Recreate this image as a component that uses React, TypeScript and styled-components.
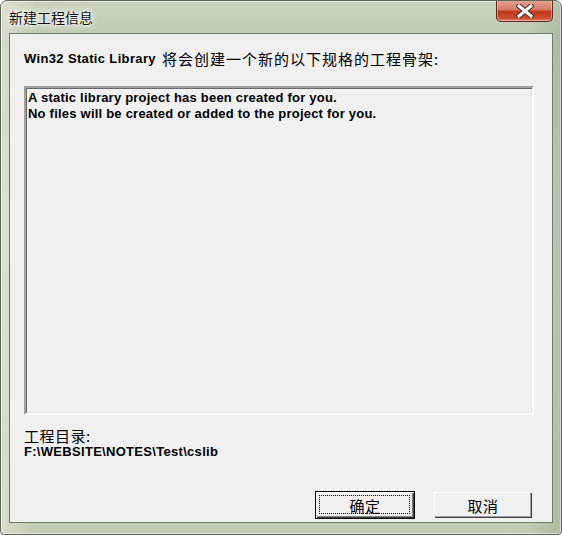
import React from "react";
import styled, { createGlobalStyle } from "styled-components";

const GlobalStyle = createGlobalStyle`
  html, body {
    margin: 0;
    padding: 0;
    background: #ffffff;
  }
  * {
    box-sizing: border-box;
  }
`;

const cjk = `"Noto Sans CJK SC", "Noto Sans", sans-serif`;
const latin = `"Liberation Sans", Arial, "Noto Sans CJK SC", sans-serif`;

const Window = styled.div`
  width: 562px;
  height: 535px;
  display: flex;
  flex-direction: column;
  padding: 0 8px 11px 8px;
  border: 1px solid #5d6659;
  border-radius: 7px 7px 4px 4px;
  background:
    linear-gradient(90deg, rgba(255, 255, 255, 0.35) 0%, rgba(255, 255, 255, 0) 6%, rgba(255, 255, 255, 0) 94%, rgba(120, 135, 110, 0.25) 100%),
    linear-gradient(180deg, #c9d2bd 0%, #bfc9b2 8%, #cbd4bf 40%, #c2ccb4 100%);
  box-shadow: inset 0 0 0 1px rgba(255, 255, 255, 0.5);
  overflow: hidden;
`;

const TitleBar = styled.div`
  height: 32px;
  display: flex;
  align-items: flex-start;
  justify-content: space-between;
`;

const Title = styled.span`
  margin-top: 7px;
  font-family: ${cjk};
  font-size: 14px;
  line-height: 18px;
  color: #111;
  text-shadow: 0 0 6px #fff, 0 0 10px #fff, 0 0 3px #fff;
`;

const CloseButton = styled.div`
  width: 57px;
  height: 22px;
  margin-top: -1px;
  display: flex;
  align-items: center;
  justify-content: center;
  border: 1px solid #5e2b20;
  border-top: none;
  border-radius: 0 0 5px 5px;
  background: linear-gradient(180deg, #e6a696 0%, #d67a66 45%, #c0391f 55%, #c94b2d 85%, #e0836a 100%);
  box-shadow: inset 0 0 0 1px rgba(255, 220, 210, 0.45);
`;

const Client = styled.div`
  flex: 1;
  display: flex;
  flex-direction: column;
  border: 1px solid #6e7a6b;
  background: #f0f0f0;
  padding: 0 19px 0 14px;
`;

const Heading = styled.div`
  margin-top: 14px;
  height: 20px;
  display: flex;
  align-items: center;
  color: #000;
`;

const Bold = styled.span`
  font-family: ${latin};
  font-weight: bold;
  font-size: 13px;
  letter-spacing: 0.35px;
  margin-right: 6px;
`;

const Cjk = styled.span`
  font-family: ${cjk};
  font-size: 15px;
  letter-spacing: 1px;
`;

const TextBox = styled.div`
  margin-top: 18px;
  width: 510px;
  height: 329px;
  border-style: solid;
  border-width: 2px;
  border-color: #a0a0a0 #ffffff #ffffff #a0a0a0;
  box-shadow: inset 1px 1px 0 #696969, inset -1px -1px 0 #e3e3e3;
  background: #f0f0f0;
  padding: 2px 2px;
`;

const BoxLine = styled.div`
  font-family: ${latin};
  font-weight: bold;
  font-size: 13px;
  letter-spacing: 0.22px;
  line-height: 16px;
  color: #000;
`;

const DirLabel = styled.div`
  margin-top: 13px;
  font-family: ${cjk};
  font-size: 15px;
  line-height: 16px;
  letter-spacing: 0.5px;
  color: #000;
`;

const DirPath = styled.div`
  font-family: ${latin};
  font-weight: bold;
  font-size: 13px;
  letter-spacing: 0.3px;
  line-height: 15px;
  color: #000;
`;

const ButtonRow = styled.div`
  margin-top: auto;
  margin-bottom: 3px;
  display: flex;
  justify-content: flex-end;
  gap: 18px;
`;

const Button = styled.div<{ $default?: boolean }>`
  width: 100px;
  height: 28px;
  display: flex;
  align-items: center;
  justify-content: center;
  position: relative;
  font-family: ${cjk};
  font-size: 15px;
  letter-spacing: 0.5px;
  color: #000;
  background: #f0f0f0;
  border: 1px solid ${(p) => (p.$default ? "#000" : "#f0f0f0")};
  box-shadow: ${(p) =>
    p.$default
      ? "inset 1px 1px 0 #ffffff, inset -1px -1px 0 #404040, inset -2px -2px 0 #808080"
      : "inset 1px 1px 0 #ffffff, inset -1px -1px 0 #404040, inset -2px -2px 0 #a0a0a0"};
`;

const Focus = styled.span`
  position: absolute;
  inset: 3px 4px 4px 3px;
  border: 1px dotted #000;
`;

const CloseGlyph = () => (
  <svg width="18" height="14" viewBox="0 0 18 14">
    <path
      d="M3 2 L15 12 M15 2 L3 12"
      stroke="#3a2a26"
      strokeWidth="5"
      strokeLinecap="square"
    />
    <path
      d="M3 2 L15 12 M15 2 L3 12"
      stroke="#ffffff"
      strokeWidth="3"
      strokeLinecap="square"
    />
  </svg>
);

export default function App() {
  return (
    <>
      <GlobalStyle />
      <Window>
        <TitleBar>
          <Title>新建工程信息</Title>
          <CloseButton>
            <CloseGlyph />
          </CloseButton>
        </TitleBar>
        <Client>
          <Heading>
            <Bold>Win32 Static Library</Bold>
            <Cjk>将会创建一个新的以下规格的工程骨架:</Cjk>
          </Heading>
          <TextBox>
            <BoxLine>A static library project has been created for you.</BoxLine>
            <BoxLine>No files will be created or added to the project for you.</BoxLine>
          </TextBox>
          <DirLabel>工程目录:</DirLabel>
          <DirPath>F:\WEBSITE\NOTES\Test\cslib</DirPath>
          <ButtonRow>
            <Button $default>
              <Focus />
              确定
            </Button>
            <Button>取消</Button>
          </ButtonRow>
        </Client>
      </Window>
    </>
  );
}
